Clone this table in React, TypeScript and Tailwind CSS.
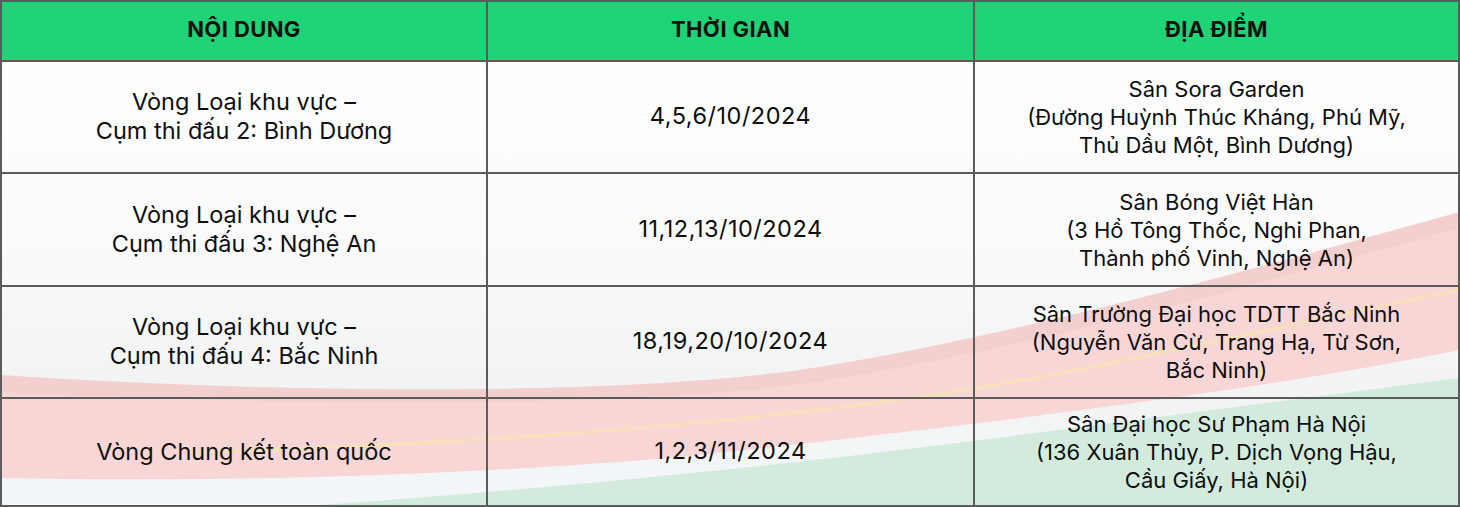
import React from "react";

const rows = [
  {
    name: ["Vòng Loại khu vực –", "Cụm thi đấu 2: Bình Dương"],
    time: "4,5,6/10/2024",
    place: ["Sân Sora Garden", "(Đường Huỳnh Thúc Kháng, Phú Mỹ,", "Thủ Dầu Một, Bình Dương)"],
  },
  {
    name: ["Vòng Loại khu vực –", "Cụm thi đấu 3: Nghệ An"],
    time: "11,12,13/10/2024",
    place: ["Sân Bóng Việt Hàn", "(3 Hồ Tông Thốc, Nghi Phan,", "Thành phố Vinh, Nghệ An)"],
  },
  {
    name: ["Vòng Loại khu vực –", "Cụm thi đấu 4: Bắc Ninh"],
    time: "18,19,20/10/2024",
    place: ["Sân Trường Đại học TDTT Bắc Ninh", "(Nguyễn Văn Cừ, Trang Hạ, Từ Sơn,", "Bắc Ninh)"],
  },
  {
    name: ["Vòng Chung kết toàn quốc"],
    time: "1,2,3/11/2024",
    place: ["Sân Đại học Sư Phạm Hà Nội", "(136 Xuân Thủy, P. Dịch Vọng Hậu,", "Cầu Giấy, Hà Nội)"],
  },
];

// stadium swoosh drawn behind the table
const Backdrop = () => (
  <svg
    className="absolute inset-0 h-full w-full"
    viewBox="0 0 1460 507"
    preserveAspectRatio="none"
  >
    <defs>
      <linearGradient id="bg" x1="0" y1="0" x2="0" y2="1">
        <stop offset="0" stopColor="#ffffff" />
        <stop offset="0.45" stopColor="#fbfbfb" />
        <stop offset="0.75" stopColor="#f2f3f3" />
        <stop offset="1" stopColor="#f3f7f9" />
      </linearGradient>
    </defs>
    <rect width="1460" height="507" fill="url(#bg)" />
    <path
      d="M0,375 C250,392 600,398 800,370 C1000,340 1250,270 1460,212 L1460,350 C1250,392 1000,422 700,455 C450,478 200,482 0,478 Z"
      fill="#f8d6d5"
    />
    <path
      d="M0,375 C250,392 600,398 800,370 C1000,340 1250,270 1460,212 L1460,228 C1250,286 1000,356 800,384 C600,410 250,404 0,392 Z"
      fill="#f1cdcc"
      opacity="0.7"
    />
    <path
      d="M200,452 C600,440 900,408 1100,365 C1250,335 1380,305 1460,290"
      fill="none"
      stroke="#f7e3b0"
      strokeWidth="3"
      opacity="0.8"
    />
    <path
      d="M0,525 C400,505 750,470 980,440 C1200,412 1350,392 1460,378 L1460,507 L0,507 Z"
      fill="#d3ebdd"
    />
  </svg>
);

export default function App() {
  return (
    <div className="w-[1460px] h-[507px] relative overflow-hidden bg-white font-['Inter','Noto_Sans',sans-serif] text-[#0e0e0e]">
      <Backdrop />
      <div className="relative grid h-full grid-cols-[486px_487px_1fr] grid-rows-[60px_112px_113px_112px_1fr] border-2 border-[#5b5b5b]">
        {["NỘI DUNG", "THỜI GIAN", "ĐỊA ĐIỂM"].map((h, i) => (
          <div
            key={h}
            className={`flex items-center justify-center pb-1 bg-[#1ed476] text-[22px] font-bold tracking-[0.4px] text-[#101010] border-b-2 border-[#5b5b5b] ${
              i < 2 ? "border-r-2" : ""
            }`}
          >
            {h}
          </div>
        ))}
        {rows.map((r, ri) => (
          <React.Fragment key={ri}>
            <div
              className={`flex flex-col items-center justify-center pb-0.5 text-[23.5px] leading-[29px] border-r-2 border-[#5b5b5b] ${
                ri < 3 ? "border-b-2" : ""
              }`}
            >
              {r.name.map((l) => (
                <span key={l}>{l}</span>
              ))}
            </div>
            <div
              className={`flex items-center justify-center pb-0.5 text-[23.5px] tracking-[0.5px] border-r-2 border-[#5b5b5b] ${
                ri < 3 ? "border-b-2" : ""
              }`}
            >
              {r.time}
            </div>
            <div
              className={`flex flex-col items-center justify-center text-[22px] leading-[28px] border-[#5b5b5b] ${
                ri < 3 ? "border-b-2" : ""
              }`}
            >
              {r.place.map((l) => (
                <span key={l}>{l}</span>
              ))}
            </div>
          </React.Fragment>
        ))}
      </div>
    </div>
  );
}
